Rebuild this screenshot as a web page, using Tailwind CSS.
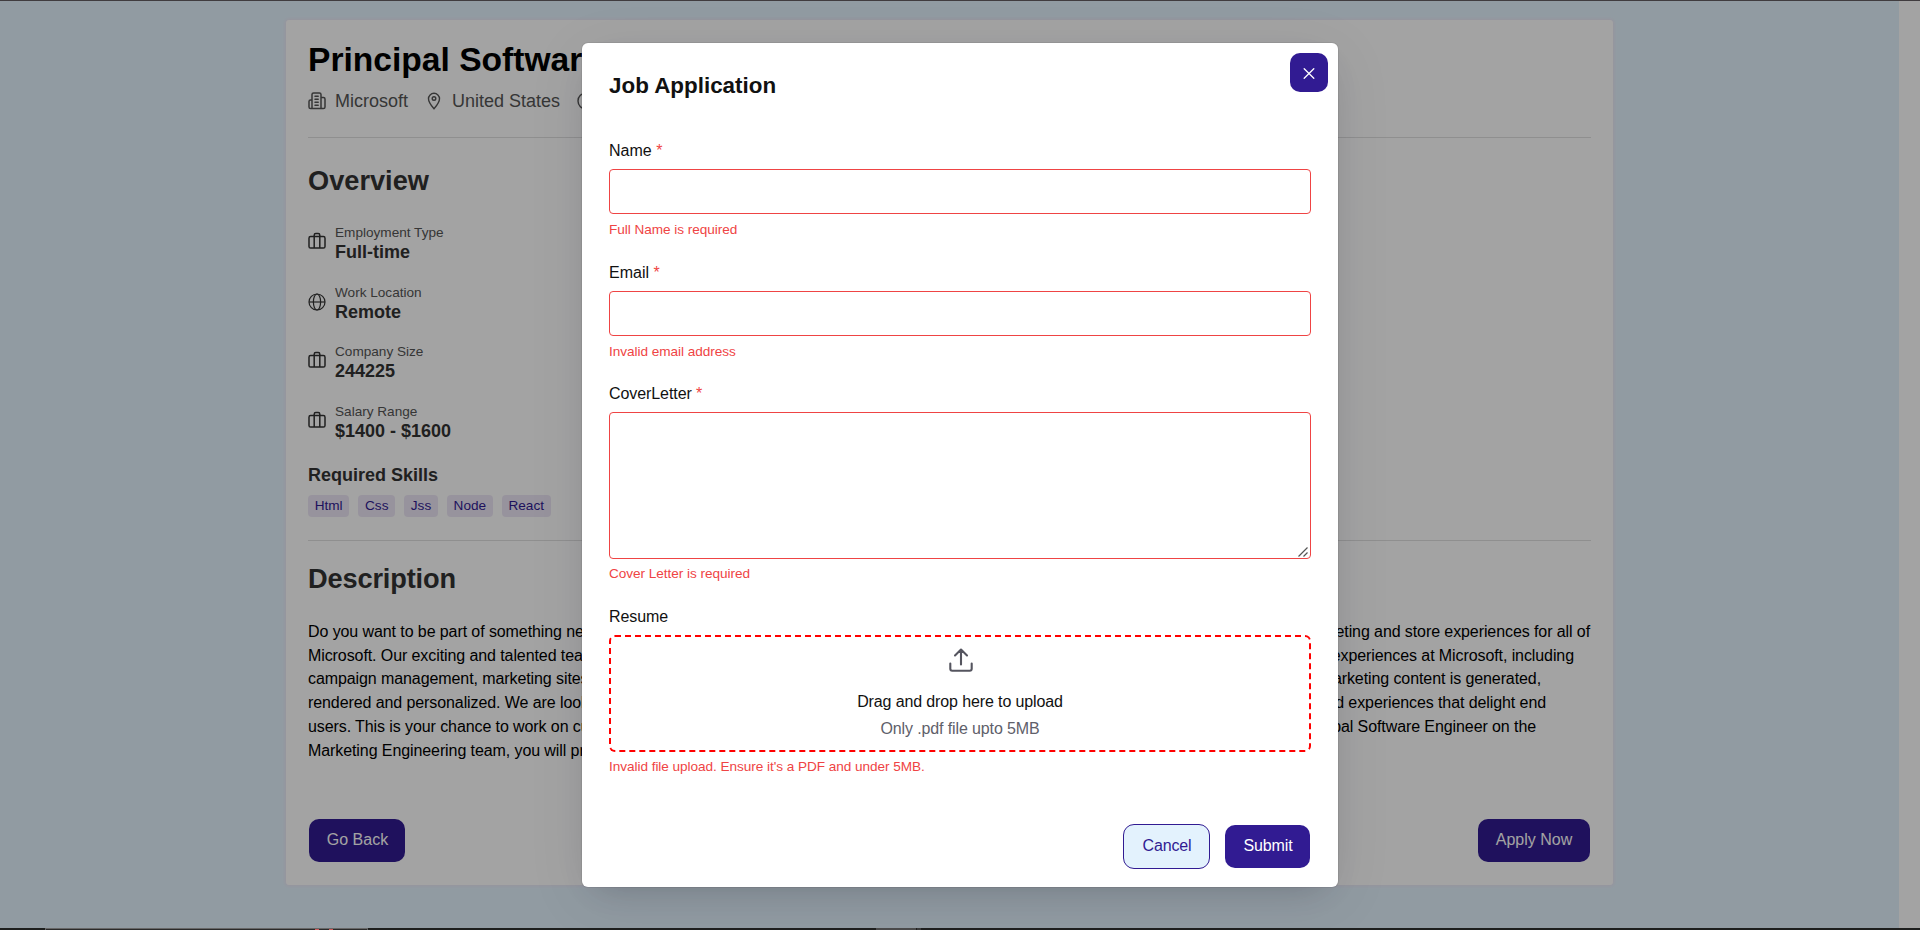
<!DOCTYPE html>
<html lang="en">
<head>
<meta charset="utf-8">
<title>Job Application</title>
<script src="https://cdn.jsdelivr.net/npm/@tailwindcss/browser@4"></script>
</head>
<body class="bg-white font-['Liberation_Sans',Arial,sans-serif] text-base text-black">
<svg class="hidden">
  <symbol id="case" viewBox="0 0 18 18" fill="none" stroke="currentColor" stroke-width="1.5" stroke-linejoin="round">
    <rect x="1" y="4.6" width="16" height="11.4" rx="1.6"/>
    <path d="M6.2 16V3.2Q6.2 1.6 7.8 1.6H10.2Q11.8 1.6 11.8 3.2V16"/>
  </symbol>
</svg>
<div class="relative flex h-[930px] w-[1920px] flex-col overflow-hidden">
  <div class="flex h-[928px]">
    <main class="w-[1899px] bg-[#e3f2fd] pt-5">
      <section class="mx-auto flex h-[865px] w-[1327px] flex-col rounded-[3px] bg-white px-[22px] shadow-[0_0_3px_1px_#ede7f6]">
        <h1 class="mt-5 h-10 text-[33.6px] leading-10 font-bold">Principal Software Engineer</h1>
        <div class="mt-[9px] flex h-6 items-center text-lg leading-6 text-[#555]">
          <svg class="size-[18px]" viewBox="0 0 18 18" fill="none" stroke="currentColor" stroke-width="1.5" stroke-linejoin="round" stroke-linecap="round"><path d="M4 16.600V2.600Q4 1 5.600 1H11.400Q13 1 13 2.600V16.600M4 8H2.600Q1 8 1 9.600V15Q1 16.600 2.600 16.600H15.400Q17 16.600 17 15V7Q17 5.400 15.400 5.400H13M7 4.200H10.200M7 7.200H10.200M7 10.200H10.200M7 13.200H10.200"/></svg>
          <span class="ml-[9px]">Microsoft</span>
          <svg class="ml-[17px] size-[18px]" viewBox="0 0 18 18" fill="none" stroke="currentColor" stroke-width="1.400"><path d="M9 16.800C6 13.400 3.500 9.800 3.500 6.800A5.500 5.500 0 0 1 14.500 6.800C14.500 9.800 12 13.400 9 16.800Z"/><circle cx="9" cy="6.500" r="1.800"/></svg>
          <span class="ml-[9px]">United States</span>
          <svg class="ml-[17px] size-[18px]" viewBox="0 0 18 18" fill="none" stroke="currentColor" stroke-width="1.400"><circle cx="9" cy="9" r="8"/><path d="M9 4V9L12 11"/></svg>
        </div>
        <hr class="mt-6 border-[#e0e0e0]">
        <h2 class="mt-[27px] h-8 text-[27.200px] leading-8 font-bold text-[#333]">Overview</h2>
        <div class="mt-[26px] flex flex-col gap-[19.700px] text-[#333]">
          <div class="flex h-10 items-center"><svg class="-mt-1 size-[18px]"><use href="#case"/></svg><div class="ml-[9px] flex flex-col"><span class="h-[18px] text-[13.600px] leading-[18px] text-[#555]">Employment Type</span><span class="h-5 text-lg leading-5 font-bold">Full-time</span></div></div>
          <div class="flex h-10 items-center"><svg class="size-[18px] -mt-px" viewBox="0 0 18 18" fill="none" stroke="currentColor" stroke-width="1.200"><circle cx="9" cy="9" r="8"/><ellipse cx="9" cy="9" rx="3.600" ry="8"/><path d="M1 9H17"/></svg><div class="ml-[9px] flex flex-col"><span class="h-[18px] text-[13.600px] leading-[18px] text-[#555]">Work Location</span><span class="h-5 text-lg leading-5 font-bold">Remote</span></div></div>
          <div class="flex h-10 items-center"><svg class="-mt-1 size-[18px]"><use href="#case"/></svg><div class="ml-[9px] flex flex-col"><span class="h-[18px] text-[13.600px] leading-[18px] text-[#555]">Company Size</span><span class="h-5 text-lg leading-5 font-bold">244225</span></div></div>
          <div class="flex h-10 items-center"><svg class="-mt-1 size-[18px]"><use href="#case"/></svg><div class="ml-[9px] flex flex-col"><span class="h-[18px] text-[13.600px] leading-[18px] text-[#555]">Salary Range</span><span class="h-5 text-lg leading-5 font-bold">$1400 - $1600</span></div></div>
        </div>
        <h3 class="mt-[21px] h-6 text-lg leading-6 font-bold text-[#333]">Required Skills</h3>
        <div class="mt-2 flex h-[22px] gap-[9px] text-[13.600px] leading-[21px] text-[#311b92]">
          <span class="rounded-[4px] bg-[#ede7f6] px-[6.700px]">Html</span><span class="rounded-[4px] bg-[#ede7f6] px-[6.700px]">Css</span><span class="rounded-[4px] bg-[#ede7f6] px-[6.700px]">Jss</span><span class="rounded-[4px] bg-[#ede7f6] px-[6.700px]">Node</span><span class="rounded-[4px] bg-[#ede7f6] px-[6.700px]">React</span>
        </div>
        <hr class="mt-[23px] border-[#e0e0e0]">
        <h2 class="mt-[22px] h-8 text-[27.200px] leading-8 font-bold tracking-[-0.15px] text-[#333]">Description</h2>
        <div class="mt-[25px] flex flex-col leading-[23.700px] tracking-[-0.09px] whitespace-nowrap">
          <div class="flex justify-between pr-[1px]"><span>Do you want to be part of something new and exciting?</span><span>marketing and store experiences for all of</span></div>
          <div class="flex justify-between pr-[17px]"><span>Microsoft. Our exciting and talented team builds</span><span>experiences at Microsoft, including</span></div>
          <div class="flex justify-between pr-[50px]"><span>campaign management, marketing sites and</span><span>marketing content is generated,</span></div>
          <div class="flex justify-between pr-[45px]"><span>rendered and personalized. We are looking for</span><span>and experiences that delight end</span></div>
          <div class="flex justify-between pr-[55px]"><span>users. This is your chance to work on cutting edge</span><span>Principal Software Engineer on the</span></div>
          <div><span>Marketing Engineering team, you will provide</span></div>
        </div>
        <div class="mt-auto mb-[23px] flex justify-between px-[1px] text-white">
          <button class="h-[43px] w-24 rounded-[10px] bg-[#311b92] pb-0.5 pl-px">Go Back</button>
          <button class="h-[43px] w-28 rounded-[10px] bg-[#311b92] pb-0.5">Apply Now</button>
        </div>
      </section>
    </main>
    <div class="flex-1 bg-white"></div>
  </div>

  <div class="absolute inset-0 flex items-start justify-center bg-black/36 pt-[43px]">
    <div role="dialog" class="relative flex h-[844px] w-[756px] flex-col rounded-md bg-white px-[27px] text-[#111] shadow-[0_0_0_1px_rgba(0,0,0,0.06),0_12px_60px_rgba(0,0,50,0.08),0_12px_32px_-16px_rgba(0,0,0,0.2)]">
      <button class="absolute top-[10px] right-[10px] flex h-[39px] w-[38px] items-center justify-center rounded-[10px] bg-[#311b92] text-white"><svg class="size-3" viewBox="0 0 12 12" fill="none" stroke="currentColor" stroke-width="1.300" stroke-linecap="round"><path d="M1.200 1.700L10.800 11.300M10.800 1.700L1.200 11.300"/></svg></button>
      <h2 class="mt-[29px] h-7 text-[22.400px] leading-7 font-bold">Job Application</h2>
      <label class="mt-[41px] h-5 leading-5">Name <span class="text-[#ef4444]">*</span></label>
      <input class="mt-[8px] h-[45px] shrink-0 rounded-[4px] border border-[#ef4444] outline-none">
      <p class="mt-[7px] h-[18px] text-[13.600px] leading-[18px] tracking-[-0.04px] text-[#ef4444]">Full Name is required</p>
      <label class="mt-[24px] h-5 leading-5">Email <span class="text-[#ef4444]">*</span></label>
      <input class="mt-[8px] h-[45px] shrink-0 rounded-[4px] border border-[#ef4444] outline-none">
      <p class="mt-[7px] h-[18px] text-[13.600px] leading-[18px] tracking-[-0.04px] text-[#ef4444]">Invalid email address</p>
      <label class="mt-[23px] h-5 leading-5 tracking-[-0.08px]">CoverLetter <span class="text-[#ef4444]">*</span></label>
      <div class="relative mt-[8px] h-[147px] shrink-0">
        <textarea class="block h-full w-full resize-none rounded-[4px] border border-[#ef4444] outline-none"></textarea>
        <svg class="absolute right-[3px] bottom-[2px] size-[10px]" viewBox="0 0 10 10" fill="none" stroke="#555" stroke-width="1.200"><path d="M0.500 9.500L9.500 0.500M5.500 9.500L9.500 5.500"/></svg>
      </div>
      <p class="mt-[6px] h-[18px] text-[13.600px] leading-[18px] tracking-[-0.04px] text-[#ef4444]">Cover Letter is required</p>
      <label class="mt-[24px] h-5 leading-5 tracking-[-0.08px]">Resume</label>
      <div class="mt-[8px] flex h-[117px] shrink-0 flex-col items-center rounded-md border-2 border-dashed border-[#f00] pt-[11px]">
        <svg class="ml-px size-6" viewBox="0 0 24 24" fill="none" stroke="#55555f" stroke-width="2.100" stroke-linecap="round" stroke-linejoin="round"><path d="M1.300 15.500V20.700Q1.300 22.700 3.300 22.700H20.700Q22.700 22.700 22.700 20.700V15.500M12 16.500V1.700M6 7.500L12 1.500L18 7.500"/></svg>
        <p class="mt-[20px] h-5 leading-5 tracking-[-0.12px]">Drag and drop here to upload</p>
        <p class="mt-[7px] h-5 leading-5 tracking-[-0.12px] text-[#60606a]">Only .pdf file upto 5MB</p>
      </div>
      <p class="mt-[6px] h-[18px] text-[13.600px] leading-[18px] tracking-[-0.05px] text-[#ef4444]">Invalid file upload. Ensure it's a PDF and under 5MB.</p>
      <div class="mt-auto mb-[18px] flex items-center justify-end gap-[15px] pr-[1px]">
        <button class="h-[45px] w-[87px] rounded-[11px] border border-[#311b92] bg-[#e3f2fd] pb-0.5 pl-px tracking-[-0.15px] text-[#311b92]">Cancel</button>
        <button class="h-[43px] w-[85px] rounded-[10px] bg-[#311b92] pb-0.5 pl-px tracking-[-0.1px] text-white">Submit</button>
      </div>
    </div>
  </div>

  <div class="absolute inset-x-0 top-0 h-px bg-[#403c3f]"></div>
  <div class="absolute inset-x-0 bottom-0 flex h-0.5 bg-[#1e1f1e]">
    <div class="ml-[45px] flex w-[323px] border border-b-0 border-[#666] bg-[#2b2b2b]"><div class="ml-[269px] h-px w-1 bg-[#d05a5a]"></div><div class="ml-[10px] h-px w-1 bg-[#d05a5a]"></div></div>
    <div class="ml-[508px] w-10 bg-[#4a4a4a]"></div><div class="ml-px w-1 bg-[#3a3a3a]"></div>
  </div>
</div>
</body>
</html>
